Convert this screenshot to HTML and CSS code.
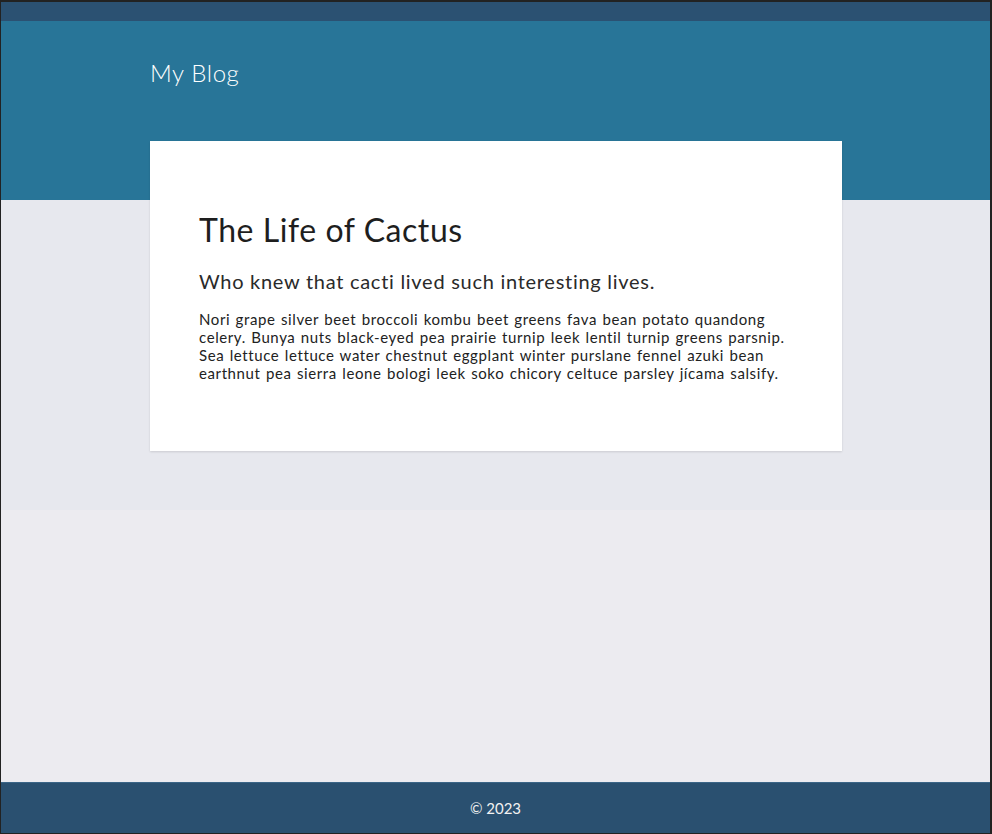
FILE: index.html
```html
<!DOCTYPE html>
<html lang="en">
<head>
<meta charset="utf-8">
<title>My Blog</title>
<link rel="stylesheet" href="styles.css">
</head>
<body>
<div class="frame">
  <div class="topbar"></div>
  <header class="hero">
    <div class="brand">My Blog</div>
  </header>
  <section class="band">
    <article class="card">
      <h1 class="title">The Life of Cactus</h1>
      <h2 class="subtitle">Who knew that cacti lived such interesting lives.</h2>
      <p class="body">Nori grape silver beet broccoli kombu beet greens fava bean potato quandong celery. Bunya nuts black-eyed pea prairie turnip leek lentil turnip greens parsnip. Sea lettuce lettuce water chestnut eggplant winter purslane fennel azuki bean earthnut pea sierra leone bologi leek soko chicory celtuce parsley jícama salsify.</p>
    </article>
  </section>
  <div class="filler"></div>
  <footer class="foot">© 2023</footer>
</div>
</body>
</html>
```
FILE: styles.css
```css
* { box-sizing: border-box; }
html, body { margin: 0; padding: 0; }
body {
  font-family: Lato, "Open Sans", sans-serif;
  background: #222;
}
.frame {
  height: 834px;
  border: 1px solid #222;
  border-top-width: 2px;
  border-right-width: 2px;
  display: flex;
  flex-direction: column;
  background: #ecebf0;
}
.topbar {
  height: 19px;
  background: #2b5172;
  flex: none;
}
.hero {
  height: 179px;
  background: #287598;
  padding: 40px 0 0 149px;
  flex: none;
}
.brand {
  color: #fff;
  font-size: 24px;
  font-weight: 300;
  line-height: 24px;
  letter-spacing: 0.6px;
}
.band {
  background: #e7e8ee;
  height: 310px;
  padding: 0 0 0 149px;
  flex: none;
}
.card {
  width: 692px;
  height: 310px;
  margin-top: -59px;
  background: #fff;
  box-shadow: 0 1px 2px rgba(0,0,0,0.12);
  padding: 69px 49px 0 49px;
}
.title {
  margin: 0;
  font-size: 32px;
  font-weight: 400;
  line-height: 40px;
  letter-spacing: 0.55px;
  color: #1e1e1e;
}
.subtitle {
  margin: 18px 0 0;
  font-size: 20px;
  font-weight: 400;
  line-height: 26px;
  letter-spacing: 0.72px;
  color: #2a2a2a;
}
.body {
  margin: 16px 0 0;
  font-size: 15px;
  font-weight: 400;
  line-height: 18px;
  letter-spacing: 0.6px;
  word-spacing: 1px;
  color: #222;
}
.filler { flex: 1; }
.foot {
  height: 51px;
  flex: none;
  background: #2a5070;
  color: #f2f2f2;
  font-size: 15px;
  display: flex;
  align-items: center;
  justify-content: center;
  border-top: 1px solid #3b6587;
}
```
